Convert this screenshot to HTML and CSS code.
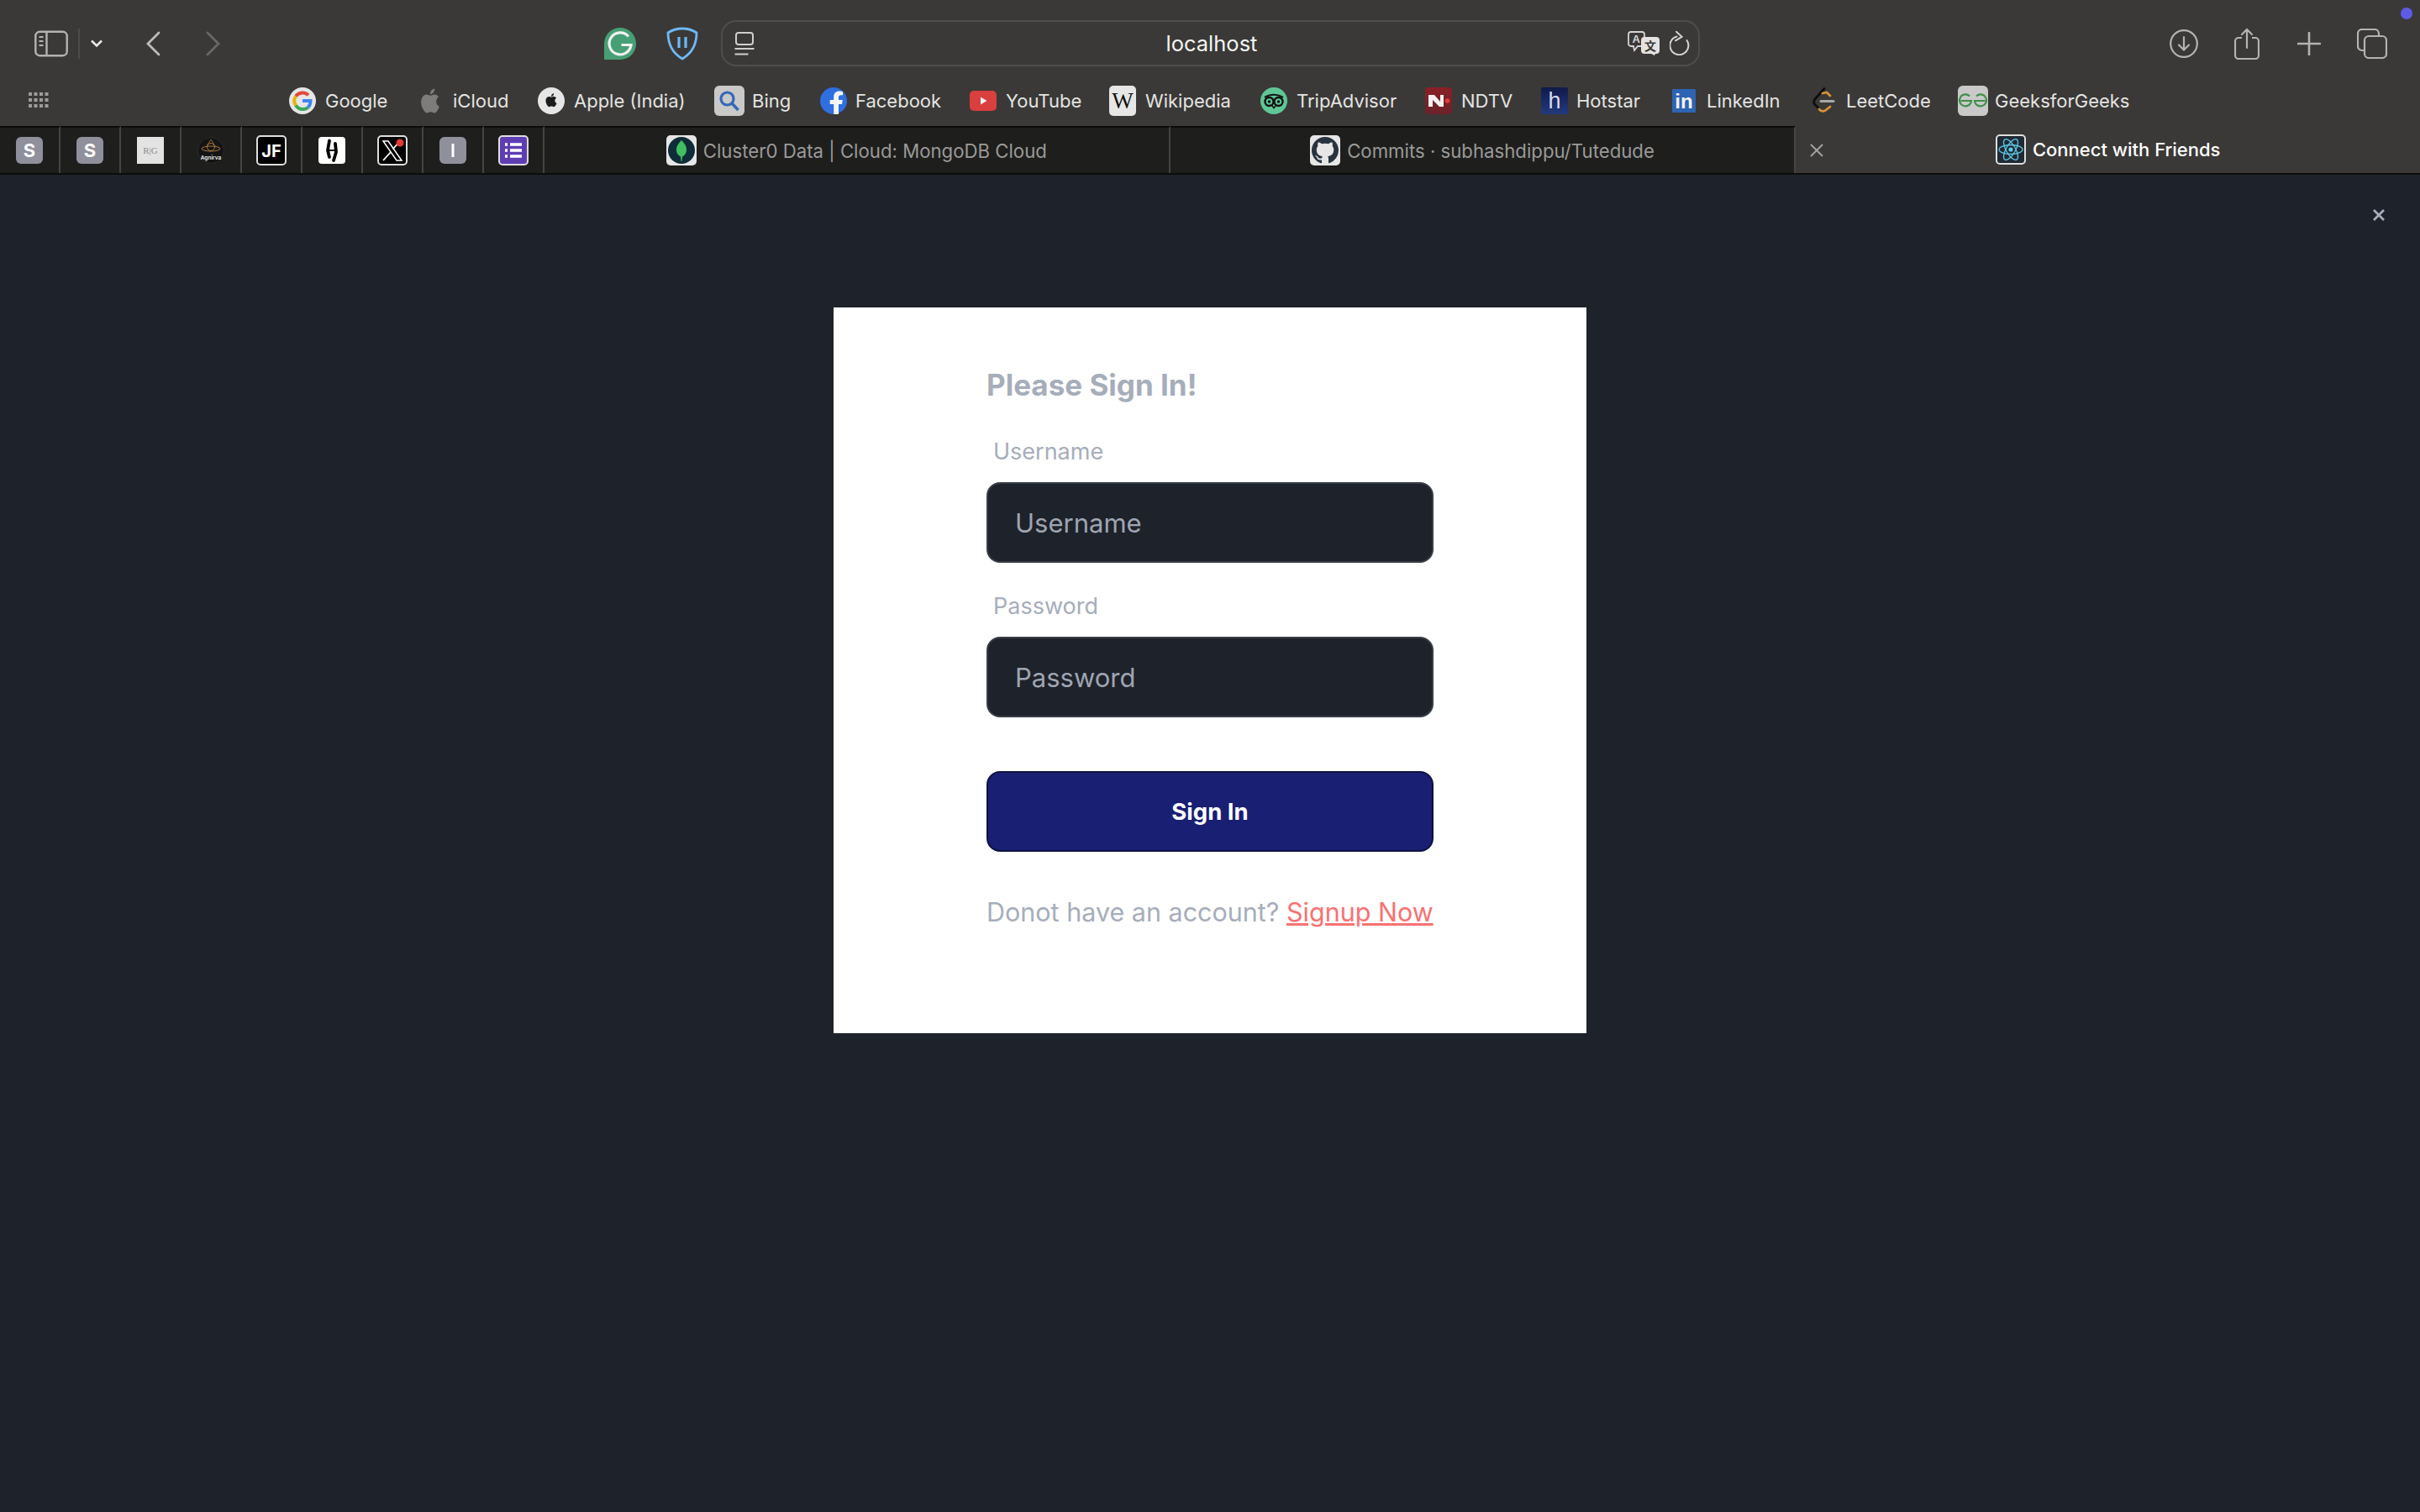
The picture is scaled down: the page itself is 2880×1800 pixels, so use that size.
FILE: index.html
```html
<!DOCTYPE html>
<html lang="en">
<head>
<meta charset="utf-8">
<title>Connect with Friends</title>
<link rel="stylesheet" href="styles.css">
</head>
<body>
<header class="chrome">
  <div class="toolbar">
    <div class="tb-left">
      <div class="nav">
        <svg class="i-sidebar" width="40" height="32" viewBox="0 0 40 32" fill="none"><rect x="1.3" y="1.8" width="37.4" height="28.4" rx="5" stroke="#b4b3b1" stroke-width="2.4"/><path d="M14.5 2v28" stroke="#b4b3b1" stroke-width="2.4"/><path d="M5.5 8h5M5.5 13h5M5.5 18h5" stroke="#b4b3b1" stroke-width="2"/></svg>
        <span class="nav-div"></span>
        <svg class="i-chev" width="16" height="11" viewBox="0 0 16 11" fill="none"><path d="M2 2.5l6 6 6-6" stroke="#e8e8e6" stroke-width="2.6"/></svg>
        <svg class="i-back" width="18" height="30" viewBox="0 0 18 30" fill="none"><path d="M16 2L3 15l13 13" stroke="#bdbcba" stroke-width="2.8" stroke-linecap="round"/></svg>
        <svg class="i-fwd" width="18" height="30" viewBox="0 0 18 30" fill="none"><path d="M2 2l13 13L2 28" stroke="#686766" stroke-width="2.8" stroke-linecap="round"/></svg>
      </div>
      <div class="ext">
        <svg width="38" height="38" viewBox="0 0 38 38" fill="none"><path d="M19 0a19 19 0 0 1 0 38H0V19A19 19 0 0 1 19 0z" fill="#479f75"/><path d="M29 10.500A13 13 0 1 0 32 20.500H20.500" stroke="#f2f2f0" stroke-width="3.200"/></svg>
        <svg width="38" height="40" viewBox="0 0 38 40" fill="none"><path d="M19 2c6 0 12 1.500 17 5 0 12-5 24-17 31C7 31 2 19 2 7c5-3.500 11-5 17-5z" stroke="#6fb9f6" stroke-width="2.800" stroke-linejoin="round"/><path d="M15 12v13M23 12v13" stroke="#6fb9f6" stroke-width="3.200"/></svg>
      </div>
    </div>
    <div class="address">
      <svg class="i-page" width="24" height="28" viewBox="0 0 24 28" fill="none"><rect x="2" y="1" width="20" height="14" rx="3" stroke="#d0cfcd" stroke-width="2"/><path d="M0.500 20h23" stroke="#d0cfcd" stroke-width="2"/><path d="M0.500 26.500h16" stroke="#d0cfcd" stroke-width="2"/></svg>
      <span class="url">localhost</span>
      <div class="addr-right">
        <svg class="i-translate" width="38" height="29" viewBox="0 0 38 29"><path d="M4 1h13a3 3 0 0 1 3 3v11a3 3 0 0 1-3 3h-5l-4 5-1-5H4a3 3 0 0 1-3-3V4a3 3 0 0 1 3-3z" fill="none" stroke="#d6d5d3" stroke-width="1.800"/><text class="tr-a" x="5.500" y="14">A</text><path d="M20 7h14a4 4 0 0 1 4 4v12a4 4 0 0 1-4 4h-1l-1 2-4-2h-8a4 4 0 0 1-4-4V11a4 4 0 0 1 4-4z" fill="#e4e3e1"/><text class="tr-z" x="27" y="22.500">文</text></svg>
        <svg class="i-reload" width="24" height="29" viewBox="0 0 24 29" fill="none"><path d="M8.500 6.500A11 11 0 1 0 20.500 11" stroke="#d6d5d3" stroke-width="2" stroke-linecap="round"/><path d="M8 0.800l6.500 6-7.500 4.500" stroke="#d6d5d3" stroke-width="2" stroke-linecap="round"/></svg>
      </div>
    </div>
    <div class="tb-right">
      <svg width="34" height="34" viewBox="0 0 34 34" fill="none"><circle cx="17" cy="17" r="15.800" stroke="#b4b3b1" stroke-width="2.200"/><path d="M17 9v15M11 18.500l6 6 6-6" stroke="#b4b3b1" stroke-width="2.200" stroke-linecap="round"/></svg>
      <svg class="i-share" width="30" height="38" viewBox="0 0 30 38" fill="none"><path d="M9 12H5a4 4 0 0 0-4 4v17a4 4 0 0 0 4 4h20a4 4 0 0 0 4-4V16a4 4 0 0 0-4-4h-4" stroke="#b4b3b1" stroke-width="2.200"/><path d="M15 24V2M9 8l6-6 6 6" stroke="#b4b3b1" stroke-width="2.200" stroke-linecap="round"/></svg>
      <svg width="28" height="28" viewBox="0 0 28 28" fill="none"><path d="M14 1v26M1 14h26" stroke="#b4b3b1" stroke-width="2.600" stroke-linecap="round"/></svg>
      <svg width="36" height="36" viewBox="0 0 36 36" fill="none"><path d="M8 26H6a5 5 0 0 1-5-5V6a5 5 0 0 1 5-5h15a5 5 0 0 1 5 5v2" stroke="#b4b3b1" stroke-width="2.200"/><rect x="9" y="9" width="26" height="26" rx="5" stroke="#b4b3b1" stroke-width="2.200"/></svg>
    </div>
    <span class="status-dot"></span>
  </div>

  <div class="bookmarks">
    <svg class="i-apps" width="24" height="24" viewBox="0 0 24 24" fill="#9d9c9a"><rect x="0" y="1" width="4" height="4"/><rect x="6.500" y="1" width="4" height="4"/><rect x="13" y="1" width="4" height="4"/><rect x="19.500" y="1" width="4" height="4"/><rect x="0" y="8" width="4" height="4"/><rect x="6.500" y="8" width="4" height="4"/><rect x="13" y="8" width="4" height="4"/><rect x="19.500" y="8" width="4" height="4"/><rect x="0" y="15" width="4" height="4"/><rect x="6.500" y="15" width="4" height="4"/><rect x="13" y="15" width="4" height="4"/><rect x="19.500" y="15" width="4" height="4"/></svg>
    <nav class="bm-list">
      <a class="bm"><svg width="32" height="32" viewBox="0 0 32 32" fill="none"><circle cx="16" cy="16" r="16" fill="#e6e6e6"/><path d="M23 9.300A10 10 0 0 0 8 10.500" stroke="#e2483b" stroke-width="4"/><path d="M8 10.500a10 10 0 0 0 0 11" stroke="#eab308" stroke-width="4"/><path d="M8 21.500a10 10 0 0 0 14.500 2.500" stroke="#3aa757" stroke-width="4"/><path d="M16 16h9.500c0 3.500-1 6-3 8" stroke="#4285f4" stroke-width="4"/></svg><span>Google</span></a>
      <a class="bm bm-icloud"><svg width="24" height="32" viewBox="3 1 18 22" fill="#7d7c7b" preserveAspectRatio="none"><path d="M18.710 19.500c-.83 1.240-1.710 2.450-3.050 2.470-1.340.03-1.770-.79-3.290-.79-1.530 0-2 .77-3.270.82-1.310.05-2.300-1.320-3.140-2.530C4.250 17 2.940 12.450 4.700 9.390c.87-1.520 2.430-2.480 4.120-2.510 1.280-.02 2.500.87 3.290.87.78 0 2.260-1.070 3.810-.91.65.03 2.470.26 3.640 1.980-.09.06-2.170 1.280-2.150 3.810.03 3.020 2.650 4.030 2.680 4.040-.03.07-.42 1.440-1.380 2.830M13 3.500c.73-.83 1.940-1.460 2.940-1.500.13 1.170-.34 2.350-1.040 3.190-.69.85-1.830 1.510-2.950 1.420-.15-1.150.41-2.350 1.050-3.110z"/></svg><span>iCloud</span></a>
      <a class="bm"><svg width="32" height="32" viewBox="0 0 32 32"><circle cx="16" cy="16" r="16" fill="#e6e6e6"/><path transform="translate(6.400 5.600) scale(.8)" fill="#1c1c1c" d="M18.710 19.500c-.83 1.240-1.710 2.450-3.050 2.470-1.340.03-1.770-.79-3.290-.79-1.530 0-2 .77-3.270.82-1.310.05-2.300-1.320-3.140-2.530C4.250 17 2.940 12.450 4.700 9.390c.87-1.520 2.430-2.480 4.120-2.510 1.280-.02 2.500.87 3.290.87.78 0 2.260-1.070 3.810-.91.65.03 2.470.26 3.640 1.980-.09.06-2.170 1.280-2.150 3.810.03 3.020 2.650 4.030 2.680 4.040-.03.07-.42 1.440-1.380 2.830M13 3.500c.73-.83 1.940-1.460 2.940-1.500.13 1.170-.34 2.350-1.040 3.190-.69.85-1.830 1.510-2.950 1.420-.15-1.150.41-2.350 1.050-3.110z"/></svg><span>Apple (India)</span></a>
      <a class="bm bm-tight"><svg width="36" height="36" viewBox="0 0 36 36" fill="none"><rect width="36" height="36" rx="6" fill="#c9c9c9"/><circle cx="15.500" cy="15.500" r="7.500" stroke="#3568b5" stroke-width="3.200"/><path d="M21 21l7.500 8" stroke="#3568b5" stroke-width="3.400"/></svg><span>Bing</span></a>
      <a class="bm bm-near"><svg width="32" height="32" viewBox="0 0 32 32"><circle cx="16" cy="16" r="16" fill="#2f6fe0"/><path fill="#f4f4f4" d="M22 32V20h4l.8-5H22v-3c0-1.500.7-2.700 2.900-2.700H27V5c-1-.2-2.500-.4-3.900-.4-4.300 0-6.900 2.600-6.900 6.900V15h-4.500v5h4.500v12z"/></svg><span>Facebook</span></a>
      <a class="bm"><svg width="32" height="32" viewBox="0 0 32 32"><rect y="4" width="32" height="24" rx="5" fill="#d93f3f"/><path d="M13 11.500l7.500 4.500-7.500 4.500z" fill="#f3f3f3"/></svg><span>YouTube</span></a>
      <a class="bm"><svg width="32" height="36" viewBox="0 0 32 36"><rect width="32" height="36" rx="5" fill="#e6e6e6"/><text class="t-wiki" x="16" y="27">W</text></svg><span>Wikipedia</span></a>
      <a class="bm"><svg width="32" height="32" viewBox="0 0 32 32" fill="none"><circle cx="16" cy="16" r="16" fill="#5fc795"/><path d="M5 12c6-4.500 16-4.500 22 0" stroke="#111" stroke-width="2"/><circle cx="10.500" cy="17" r="5" stroke="#111" stroke-width="2.400"/><circle cx="21.500" cy="17" r="5" stroke="#111" stroke-width="2.400"/><circle cx="10.500" cy="17" r="1.800" fill="#111"/><circle cx="21.500" cy="17" r="1.800" fill="#111"/><path d="M14 22l2 2.500 2-2.500" stroke="#111" stroke-width="1.600"/></svg><span>TripAdvisor</span></a>
      <a class="bm"><svg width="32" height="32" viewBox="0 0 32 32"><defs><linearGradient id="ndtv" x1="0" y1="0" x2="0" y2="1"><stop offset="0" stop-color="#8a2026"/><stop offset="1" stop-color="#6b2229"/></linearGradient></defs><rect width="32" height="32" rx="4" fill="url(#ndtv)"/><path d="M4 9h7l7 8V9h4v14h-5l-8-8v8H4z" fill="#f1f1f1"/><circle cx="26.500" cy="16" r="2.800" fill="#e53a3a"/></svg><span>NDTV</span></a>
      <a class="bm bm-near"><svg width="32" height="32" viewBox="0 0 32 32"><defs><linearGradient id="hot" x1="0" y1="0" x2="0" y2="1"><stop offset="0" stop-color="#101a4a"/><stop offset="1" stop-color="#233a7e"/></linearGradient></defs><rect width="32" height="32" rx="2" fill="url(#hot)"/><text class="t-hot" x="16" y="25">h</text></svg><span>Hotstar</span></a>
      <a class="bm bm-li"><svg width="28" height="28" viewBox="0 0 28 28"><rect width="28" height="28" rx="1.500" fill="#2e64b4"/><text class="t-in" x="14" y="23">in</text></svg><span>LinkedIn</span></a>
      <a class="bm bm-leet"><svg width="28" height="32" viewBox="0 0 28 32" fill="none"><path d="M15 1.500L4 14c-2 2.500-2 4.500 0 6.500l5 5" stroke="#0d0d0d" stroke-width="2.800" stroke-linecap="round"/><path d="M13 7l5-1 4 4" stroke="#d6923a" stroke-width="2.800" stroke-linecap="round"/><path d="M9 26c2 3 6 3 8 1l5-4" stroke="#d6923a" stroke-width="2.800" stroke-linecap="round"/><path d="M11 16.500h15" stroke="#a8a8a8" stroke-width="3" stroke-linecap="round"/></svg><span>LeetCode</span></a>
      <a class="bm bm-gfg"><svg width="36" height="36" viewBox="0 0 36 36" fill="none"><rect width="36" height="36" rx="6" fill="#c9c9c9"/><path d="M3.500 18h12.500a7 7 0 1 1-2-5.500M32.500 18H20a7 7 0 1 0 2-5.500" stroke="#3f8f4a" stroke-width="2.200"/></svg><span>GeeksforGeeks</span></a>
    </nav>
  </div>

  <div class="tabs">
    <div class="tab-pin"><svg width="32" height="32" viewBox="0 0 32 32"><rect width="32" height="32" rx="6" fill="#8f909c"/><text class="t-tile" x="16" y="24">S</text></svg></div>
    <div class="tab-pin"><svg width="32" height="32" viewBox="0 0 32 32"><rect width="32" height="32" rx="6" fill="#8f909c"/><text class="t-tile" x="16" y="24">S</text></svg></div>
    <div class="tab-pin"><svg width="32" height="32" viewBox="0 0 32 32"><rect width="32" height="32" fill="#e3e3e3"/><text class="t-rg" x="16" y="20">R|G</text></svg></div>
    <div class="tab-pin"><svg width="32" height="32" viewBox="0 0 32 32" fill="none"><circle cx="16" cy="16" r="15.500" fill="#141414" stroke="#2b2b2b"/><circle cx="16" cy="12" r="4.500" stroke="#a9793a" stroke-width="1"/><ellipse cx="16" cy="14" rx="11" ry="3" stroke="#a9793a" stroke-width="1"/><path d="M16 3l-5 8M16 3l5 8" stroke="#a9793a" stroke-width=".8"/><text class="t-agn" x="16" y="27">Agnirva</text></svg></div>
    <div class="tab-pin"><svg width="36" height="36" viewBox="0 0 36 36"><rect x="1" y="1" width="34" height="34" rx="4" fill="#000" stroke="#dedede" stroke-width="2"/><text class="t-jf" x="18" y="25.500">JF</text></svg></div>
    <div class="tab-pin"><svg width="32" height="32" viewBox="0 0 32 32" fill="none"><rect width="32" height="32" rx="4" fill="#fff"/><path d="M13 4.500L11 16l2 8M20 8l1 10-3 10" stroke="#000" stroke-width="3.800" stroke-linecap="round" stroke-linejoin="round"/><path d="M11 16h10" stroke="#000" stroke-width="2"/></svg></div>
    <div class="tab-pin"><svg width="36" height="36" viewBox="0 0 36 36" fill="none"><rect x="1" y="1" width="34" height="34" rx="4" fill="#000" stroke="#dedede" stroke-width="2"/><path d="M7 7h6l16 23h-6z" stroke="#fff" stroke-width="1.500"/><path d="M27 7L18.500 16.500M16 20L7 30" stroke="#fff" stroke-width="1.800"/><circle cx="27" cy="9" r="4.500" fill="#e53935"/></svg></div>
    <div class="tab-pin"><svg width="32" height="32" viewBox="0 0 32 32"><rect width="32" height="32" rx="6" fill="#8f909c"/><path d="M16 8v16" stroke="#fff" stroke-width="3"/></svg></div>
    <div class="tab-pin"><svg width="36" height="36" viewBox="0 0 36 36" fill="none"><rect x="1" y="1" width="34" height="34" rx="4" fill="#5f3eb3" stroke="#dedede" stroke-width="2"/><path d="M8 11h3M14 11h14M8 18h3M14 18h14M8 25h3M14 25h14" stroke="#fff" stroke-width="3.500"/></svg></div>
    <div class="tab"><svg width="36" height="36" viewBox="0 0 36 36"><rect width="36" height="36" rx="5" fill="#e6e6e6"/><circle cx="18" cy="18" r="16" fill="#0f2c38"/><path d="M18 6c4 4 6.500 8 6 12.500-.4 3.500-3 6-5 7L18.500 31h-1l-.5-5.500c-2-1-4.600-3.500-5-7C11.500 14 14 10 18 6z" fill="#3fbf5f"/></svg><span>Cluster0 Data | Cloud: MongoDB Cloud</span></div>
    <div class="tab"><svg width="36" height="36" viewBox="0 0 36 36"><rect width="36" height="36" rx="5" fill="#e6e6e6"/><path transform="translate(2 2) scale(2)" fill="#29333d" d="M8 0C3.580 0 0 3.580 0 8c0 3.540 2.290 6.530 5.470 7.590.4.070.55-.17.55-.38 0-.19-.01-.82-.01-1.490-2.010.37-2.530-.49-2.690-.94-.09-.23-.48-.94-.82-1.130-.28-.15-.68-.52-.01-.53.63-.01 1.080.58 1.230.82.72 1.210 1.870.87 2.330.66.07-.52.28-.87.51-1.070-1.780-.2-3.640-.89-3.640-3.950 0-.87.31-1.590.82-2.150-.08-.2-.36-1.020.08-2.120 0 0 .67-.21 2.200.82.64-.18 1.320-.27 2-.27.68 0 1.360.09 2 .27 1.530-1.040 2.200-.82 2.200-.82.44 1.100.16 1.920.08 2.120.51.56.82 1.270.82 2.150 0 3.070-1.870 3.750-3.650 3.950.29.25.54.73.54 1.480 0 1.070-.01 1.930-.01 2.200 0 .21.15.46.55.38A8.013 8.013 0 0016 8c0-4.420-3.580-8-8-8z"/></svg><span>Commits · subhashdippu/Tutedude</span></div>
    <div class="tab tab-active">
      <svg class="tab-close" width="16" height="16" viewBox="0 0 16 16" fill="none"><path d="M1 1l14 14M15 1L1 15" stroke="#a5a4a2" stroke-width="1.800"/></svg>
      <svg width="36" height="36" viewBox="0 0 36 36" fill="none"><rect x="1" y="1" width="34" height="34" rx="4" fill="#1f2a33" stroke="#dedede" stroke-width="2"/><g stroke="#61c8e8" stroke-width="1.300"><ellipse cx="18" cy="18" rx="14" ry="5.500"/><ellipse cx="18" cy="18" rx="14" ry="5.500" transform="rotate(60 18 18)"/><ellipse cx="18" cy="18" rx="14" ry="5.500" transform="rotate(120 18 18)"/></g><circle cx="18" cy="18" r="2.600" fill="#61c8e8"/></svg><span>Connect with Friends</span>
    </div>
  </div>
</header>

<main class="page">
  <svg class="page-close" width="16" height="16" viewBox="0 0 16 16" fill="none"><path d="M2 2l12 12M14 2L2 14" stroke="#a6adbb" stroke-width="2.800"/></svg>
  <section class="card">
    <form class="form">
      <h1 class="title">Please Sign In!</h1>
      <label class="label" for="username">Username</label>
      <input class="input" id="username" type="text" placeholder="Username">
      <label class="label label-next" for="password">Password</label>
      <input class="input" id="password" type="password" placeholder="Password">
      <button class="submit" type="button">Sign In</button>
      <p class="switch">Donot have an account? <a class="switch-link" href="#">Signup Now</a></p>
    </form>
  </section>
</main>
</body>
</html>
```
FILE: styles.css
```css
* { box-sizing: border-box; }
html, body { margin: 0; height: 100%; }
body {
  background: #1e222a;
  font-family: Inter, "Liberation Sans", sans-serif;
  display: flex;
  flex-direction: column;
  overflow: hidden;
}
svg { display: block; flex: none; }

.chrome { background: #3a3937; flex: none; }

.toolbar {
  position: relative;
  display: grid;
  grid-template-columns: 1fr 1165px 1fr;
  align-items: center;
  height: 90px;
  padding: 24px 0 11px;
}
.tb-left { display: flex; justify-content: space-between; align-items: center; padding-left: 41px; padding-right: 27px; }
.nav { display: flex; align-items: center; }
.nav-div { width: 2px; height: 36px; background: #4d4c4a; margin: 0 12px; }
.i-back { margin-left: 50px; }
.i-fwd { margin-left: 54px; }
.ext { display: flex; align-items: center; gap: 36px; }
.address {
  height: 55px;
  border: 2px solid #4e4d4b;
  border-radius: 18px;
  display: grid;
  grid-template-columns: 1fr auto 1fr;
  align-items: center;
  padding: 0 10px 0 14px;
}
.url { color: #f4f4f2; font-size: 25.500px; }
.addr-right { display: flex; justify-content: flex-end; align-items: center; gap: 12px; }
.tr-a { font: 600 13px "Liberation Sans", sans-serif; fill: #d6d5d3; }
.tr-z { font: 700 14px "Noto Sans CJK SC", sans-serif; fill: #3a3937; text-anchor: middle; }
.tb-right { display: flex; justify-content: flex-end; align-items: center; gap: 43px; padding-right: 39px; }
.i-share { margin-right: 2px; }
.status-dot { position: absolute; top: 9px; right: 9px; width: 14px; height: 14px; border-radius: 50%; background: #5e5ce6; }

.bookmarks {
  display: grid;
  grid-template-columns: 344px auto 1fr;
  align-items: center;
  height: 60px;
  padding-bottom: 1px;
}
.i-apps { grid-column: 1; margin: 2px 0 0 34px; }
.bm-list {
  grid-column: 2;
  display: grid;
  grid-template-columns: 156px 140px 210px 126px 178px 166px 180px 196px 138px 156px 166px 174px 204px;
  align-items: center;
}
.bm { display: flex; align-items: center; gap: 11px; color: #e4e4e2; font-size: 22px; white-space: nowrap; }
.bm-tight { gap: 9px; }
.bm-near { gap: 10px; }
.bm-icloud { gap: 15px; }
.bm-li { gap: 13px; }
.bm-leet { gap: 13px; }
.bm-gfg { gap: 8px; }

.t-wiki { font: 400 27px "Liberation Serif", serif; fill: #111; text-anchor: middle; }
.t-hot { font: 400 27px "Liberation Sans", sans-serif; fill: #d6dcec; text-anchor: middle; }
.t-in { font: 700 24px "Liberation Sans", sans-serif; fill: #f4f4f4; text-anchor: middle; }
.t-tile { font: 700 22px Inter, sans-serif; fill: #fff; text-anchor: middle; }
.t-rg { font: 400 11px "Liberation Serif", serif; fill: #8d8d8d; text-anchor: middle; }
.t-agn { font: 600 6.500px Inter, sans-serif; fill: #eee; text-anchor: middle; }
.t-jf { font: 700 20px Inter, sans-serif; fill: #fff; text-anchor: middle; }

.tabs { display: flex; height: 58px; border-bottom: 2px solid #0c0c0c; }
.tab-pin {
  flex: 0 0 72px;
  display: flex;
  align-items: center;
  justify-content: center;
  background: #1e1e1d;
  border-top: 2px solid #0c0c0c;
  border-right: 2px solid #444442;
}
.tab {
  flex: 1 1 0;
  display: flex;
  align-items: center;
  justify-content: center;
  gap: 8px;
  background: #1e1e1d;
  border-top: 2px solid #0c0c0c;
  border-right: 2px solid #444442;
  color: #9a9a98;
  font-size: 22.200px;
  white-space: nowrap;
}
.tab-active {
  position: relative;
  background: #3a3937;
  border: 0;
  color: #fff;
  font-size: 22px;
  font-weight: 500;
}
.tab-close { position: absolute; left: 17px; top: 21px; }

.page { position: relative; flex: 1; display: flex; justify-content: center; align-items: flex-start; padding-top: 158px; }
.page-close { position: absolute; top: 40px; right: 41px; }
.card { width: 896px; height: 864px; background: #fff; display: flex; justify-content: center; padding-top: 64px; }
.form { width: 532px; display: flex; flex-direction: column; }
.title { margin: 0 0 16px; font-size: 35px; line-height: 56px; font-weight: 700; color: #a6adbb; }
.label { padding: 16px 8px; font-size: 27px; line-height: 40px; color: #a6adbb; }
.label-next { margin-top: 16px; }
.input {
  height: 96px;
  padding: 0 32px;
  border: 2px solid rgba(166, 173, 187, .2);
  border-radius: 16px;
  background: #1e222a;
  font: 400 31px Inter, sans-serif;
  color: #a6adbb;
  outline: none;
}
.input::placeholder { color: #a6adbb; opacity: .95; }
.submit {
  margin-top: 64px;
  height: 96px;
  border: 2px solid #0e1240;
  border-radius: 16px;
  background: #191f73;
  color: #fff;
  font: 700 27.500px Inter, sans-serif;
}
.switch { margin: 48px 0 0; font-size: 30.500px; line-height: 48px; color: #a6adbb; white-space: nowrap; }
.switch-link { color: #f87272; text-decoration: underline; }
```
